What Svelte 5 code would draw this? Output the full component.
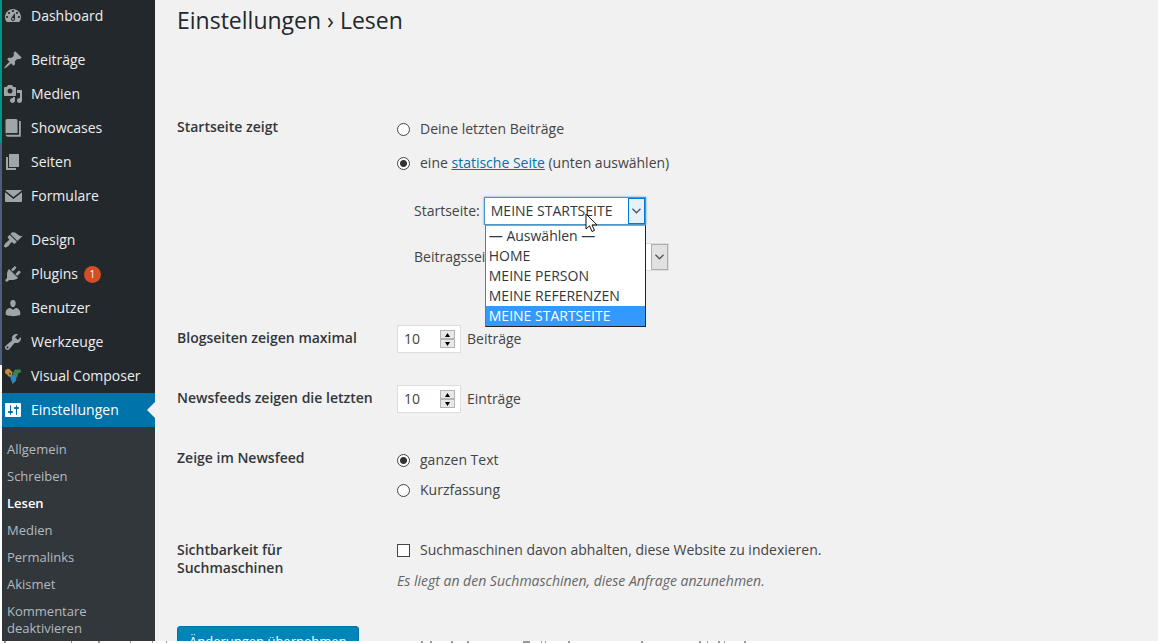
<script lang="ts">
  type MenuItem = { label: string; icon: string; count?: number; gap?: boolean; current?: boolean };

  const menu: MenuItem[] = [
    { label: 'Dashboard', icon: 'dashboard' },
    { label: 'Beiträge', icon: 'post', gap: true },
    { label: 'Medien', icon: 'media' },
    { label: 'Showcases', icon: 'showcases' },
    { label: 'Seiten', icon: 'page' },
    { label: 'Formulare', icon: 'mail' },
    { label: 'Design', icon: 'design', gap: true },
    { label: 'Plugins', icon: 'plugins', count: 1 },
    { label: 'Benutzer', icon: 'users' },
    { label: 'Werkzeuge', icon: 'tools' },
    { label: 'Visual Composer', icon: 'composer' },
    { label: 'Einstellungen', icon: 'settings', current: true },
  ];

  const submenu = ['Allgemein', 'Schreiben', 'Lesen', 'Medien', 'Permalinks', 'Akismet', 'Kommentare deaktivieren'];

  const icons: Record<string, string> = {
    dashboard: 'M3.76 16h12.48c1.11-1.32 1.77-3.03 1.77-4.88C18 6.65 14.42 3 10 3S2 6.65 2 11.12c0 1.85.65 3.56 1.76 4.88zM10 4c.55 0 1 .45 1 1s-.45 1-1 1-1-.45-1-1 .45-1 1-1zM6 6c.55 0 1 .45 1 1s-.45 1-1 1-1-.45-1-1 .45-1 1-1zm8 0c.55 0 1 .45 1 1s-.45 1-1 1-1-.45-1-1 .45-1 1-1zm-5.37 5.55L12 7v6c0 1.1-.9 2-2 2s-2-.9-2-2c0-.57.24-1.08.63-1.45zM4 10c.55 0 1 .45 1 1s-.45 1-1 1-1-.45-1-1 .45-1 1-1zm12 0c.55 0 1 .45 1 1s-.45 1-1 1-1-.45-1-1 .45-1 1-1zm-5 3c0-.55-.45-1-1-1s-1 .45-1 1 .45 1 1 1 1-.45 1-1z',
    post: 'M10.44 3.02l1.82-1.82 6.36 6.35-1.83 1.82c-1.05-.68-2.48-.57-3.41.36l-.75.75c-.92.93-1.04 2.35-.35 3.41l-1.83 1.82-2.41-2.41-2.8 2.79c-.42.42-3.38 2.71-3.8 2.29s1.86-3.39 2.28-3.81l2.79-2.79L4.1 9.36l1.83-1.82c1.05.69 2.48.57 3.4-.36l.75-.75c.93-.92 1.05-2.35.36-3.41z',
    media: 'M13 11V4c0-.55-.45-1-1-1h-1.67L9 1H5L3.67 3H2c-.55 0-1 .45-1 1v7c0 .55.45 1 1 1h10c.55 0 1-.45 1-1zM7 4.5c1.38 0 2.5 1.12 2.5 2.5S8.38 9.5 7 9.5 4.5 8.38 4.5 7 5.62 4.5 7 4.5zM14 6h5v10.5c0 1.38-1.12 2.5-2.5 2.5S14 17.88 14 16.5s1.12-2.5 2.5-2.5c.17 0 .34.02.5.05V9h-3V6zm-4 8.05V13h2v3.5c0 1.38-1.12 2.5-2.5 2.5S7 17.88 7 16.5 8.12 14 9.5 14c.17 0 .34.02.5.05z',
    showcases: 'M4 1h9a1.500 1.500 0 0 1 1.500 1.500V15H4a1.500 1.500 0 0 0-1.500.8V2.500A1.500 1.500 0 0 1 4 1zM16 3h1.800v15.800H5a2.500 2.500 0 0 1-2.500-2h13.500z',
    page: 'M6 15V2h10v13H6zm-1 1h8v2H3V5h2v11z',
    mail: 'M3 4h15a1 1 0 0 1 .8.4L10.500 11 2.200 4.400A1 1 0 0 1 3 4zM2 6.200l8.500 6.900L19 6.200V15a1 1 0 0 1-1 1H3a1 1 0 0 1-1-1z',
    design: 'M14.48 11.06L7.41 3.99l1.5-1.5c.5-.56 2.3-.47 3.51.32 1.21.8 1.43 1.28 2.91 2.1 1.18.64 2.45 1.26 4.45.85zm-.71.71L6.7 4.7 4.93 6.47c-.39.39-.39 1.02 0 1.41l1.06 1.06c.39.39.39 1.03 0 1.42-.6.6-1.43 1.11-2.21 1.69-.35.26-.7.53-1.01.84C1.43 14.23.4 16.08 1.4 17.07c.99 1 2.84-.03 4.18-1.36.31-.31.58-.66.85-1.02.57-.78 1.08-1.61 1.69-2.21.39-.39 1.02-.39 1.41 0l1.06 1.06c.39.39 1.02.39 1.41 0z',
    plugins: 'M13.11 4.36L9.87 7.6 8 5.73l3.24-3.24c.35-.34 1.05-.2 1.56.32.52.51.66 1.21.31 1.55zm-8 1.77l.91-1.12 9.01 9.01-1.19.84c-.71.71-2.63 1.16-3.82 1.16H6.14L4.9 17.26c-.59.59-1.54.59-2.12 0-.59-.58-.59-1.53 0-2.12l1.24-1.24v-3.88c0-1.13.4-3.19 1.09-3.89zm7.26 3.97l3.24-3.24c.34-.35 1.04-.21 1.55.31.52.51.66 1.21.31 1.55l-3.24 3.25z',
    users: 'M10 9.25c-2.27 0-2.73-3.44-2.73-3.44C7 4.02 7.82 2 9.97 2c2.16 0 2.98 2.02 2.71 3.81 0 0-.41 3.44-2.68 3.44zm0 2.57L12.72 10c2.39 0 4.52 2.33 4.52 4.53v2.49s-3.65 1.13-7.24 1.13c-3.65 0-7.24-1.13-7.24-1.13v-2.49c0-2.25 1.94-4.48 4.47-4.48z',
    tools: 'M16.68 9.77c-1.34 1.34-3.3 1.67-4.95.99l-5.41 6.52c-.99.99-2.59.99-3.58 0s-.99-2.59 0-3.57l6.52-5.42c-.68-1.65-.35-3.61.99-4.95 1.28-1.28 3.12-1.62 4.72-1.06l-2.89 2.89 2.82 2.82 2.86-2.87c.53 1.58.18 3.39-1.08 4.65zM3.81 16.21c.4.39 1.04.39 1.43 0 .4-.4.4-1.04 0-1.43-.39-.4-1.03-.4-1.43 0-.39.39-.39 1.03 0 1.43z',
    settings: 'M18 16V4c0-.55-.45-1-1-1H3c-.55 0-1 .45-1 1v12c0 .55.45 1 1 1h14c.55 0 1-.45 1-1zM8 11h1c.55 0 1 .45 1 1s-.45 1-1 1H8v1.5c0 .28-.22.5-.5.5s-.5-.22-.5-.5V13H6c-.55 0-1-.45-1-1s.45-1 1-1h1V5.5c0-.28.22-.5.5-.5s.5.22.5.5V11zm5-2h-1c-.55 0-1-.45-1-1s.45-1 1-1h1V5.5c0-.28.22-.5.5-.5s.5.22.5.5V7h1c.55 0 1 .45 1 1s-.45 1-1 1h-1v5.5c0 .28-.22.5-.5.5s-.5-.22-.5-.5V9z',
  };

  const pages = ['— Auswählen —', 'HOME', 'MEINE PERSON', 'MEINE REFERENZEN', 'MEINE STARTSEITE'];

  let frontType = $state('page');
  let frontPage = $state('MEINE STARTSEITE');
  let postsPage = $state('— Auswählen —');
  let open = $state(true);
  let postsPerPage = $state(10);
  let postsPerFeed = $state(10);
  let feedType = $state('full');
  let noIndex = $state(false);

  function pick(page: string) {
    frontPage = page;
    open = false;
  }
</script>

{#snippet chevron()}
  <svg width="9" height="6" viewBox="0 0 9 6" fill="none" stroke="#555" stroke-width="1.3"><path d="M.5.8l4 4 4-4" /></svg>
{/snippet}

{#snippet spinner(step: (by: number) => void)}
  <span class="spinner">
    <button type="button" tabindex="-1" aria-label="Mehr" onclick={() => step(1)}>
      <svg width="7" height="4" viewBox="0 0 7 4"><path d="M3.500 0L6 4H1z" /></svg>
    </button>
    <button type="button" tabindex="-1" aria-label="Weniger" onclick={() => step(-1)}>
      <svg width="7" height="4" viewBox="0 0 7 4"><path d="M3.500 4L6 0H1z" /></svg>
    </button>
  </span>
{/snippet}

<div class="screen">
  <div class="admin">
    <div class="edge"></div>

    <nav class="sidebar">
      <ul class="menu">
        {#each menu as item}
          <li class:gap={item.gap}>
            <a href="#{item.icon}" class:current={item.current}>
              <svg class="icon" width="20" height="20" viewBox="0 0 20 20" aria-hidden="true">
                {#if item.icon === 'composer'}
                  <path fill="#c98d35" d="M2 5.500a3 3 0 0 1 5-2l2.500 3-1 4.500-3-.5L4 8.500A3 3 0 0 1 2 5.500z" />
                  <path fill="#3c8552" d="M10 7l2-3.500h5.500L18 6l-3 1.500-.5 3.500-3.500 1.500z" />
                  <path fill="#2d8ab8" d="M7 10.500l3-2 3.500 3.500-1 3.500-3 2.500-1-3z" />
                  <path fill="#23282d" d="M6 6.500l2 1-1 2z" />
                {:else}
                  <path d={icons[item.icon]} />
                {/if}
              </svg>
              {item.label}
              {#if item.count}<span class="count">{item.count}</span>{/if}
            </a>
          </li>
        {/each}
      </ul>
      <ul class="submenu">
        {#each submenu as item}
          <li><a href="#sub" class:active={item === 'Lesen'}>{item}</a></li>
        {/each}
      </ul>
    </nav>

    <main>
      <h1>Einstellungen › Lesen</h1>

      <form onsubmit={(e) => e.preventDefault()}>
        <div class="row" role="group" aria-labelledby="front-title">
          <div class="title" id="front-title">Startseite zeigt</div>
          <div class="field">
            <div class="radios wide">
              <label><input type="radio" value="posts" bind:group={frontType} /> Deine letzten Beiträge</label>
              <label>
                <input type="radio" value="page" bind:group={frontType} />
                <span>eine <a href="#pages">statische Seite</a> (unten auswählen)</span>
              </label>
            </div>
            <ul class="selects">
              <li>
                <label for="front-page">Startseite:</label>
                <span class="select focus">
                  <select id="front-page" bind:value={frontPage} onmousedown={(e) => { e.preventDefault(); open = !open; }}>
                    {#each pages as page}<option>{page}</option>{/each}
                  </select>
                  <span class="arrow">{@render chevron()}</span>
                  {#if open}
                    <span class="list" role="listbox" aria-label="Startseite">
                      {#each pages as page}
                        <button type="button" role="option" aria-selected={page === frontPage} onclick={() => pick(page)}>{page}</button>
                      {/each}
                    </span>
                  {/if}
                  <svg class="cursor" width="13" height="20" viewBox="0 0 13 20" aria-hidden="true">
                    <path d="M1 1v15l3.500-3.200 2.500 5.700 2.500-1.100L7 11.900h5z" fill="#fff" stroke="#111" />
                  </svg>
                </span>
              </li>
              <li>
                <label for="posts-page">Beitragsseite:</label>
                <span class="select">
                  <select id="posts-page" bind:value={postsPage}>
                    {#each pages as page}<option>{page}</option>{/each}
                  </select>
                  <span class="arrow">{@render chevron()}</span>
                </span>
              </li>
            </ul>
          </div>
        </div>

        <div class="row">
          <label class="title" for="per-page">Blogseiten zeigen maximal</label>
          <div class="field amount">
            <span class="number">
              <input id="per-page" type="number" bind:value={postsPerPage} />
              {@render spinner((by) => (postsPerPage += by))}
            </span>
            Beiträge
          </div>
        </div>

        <div class="row">
          <label class="title" for="per-feed">Newsfeeds zeigen die letzten</label>
          <div class="field amount">
            <span class="number">
              <input id="per-feed" type="number" bind:value={postsPerFeed} />
              {@render spinner((by) => (postsPerFeed += by))}
            </span>
            Einträge
          </div>
        </div>

        <div class="row" role="group" aria-labelledby="feed-title">
          <div class="title" id="feed-title">Zeige im Newsfeed</div>
          <div class="field radios">
            <label><input type="radio" value="full" bind:group={feedType} /> ganzen Text</label>
            <label><input type="radio" value="short" bind:group={feedType} /> Kurzfassung</label>
          </div>
        </div>

        <div class="row" role="group" aria-labelledby="index-title">
          <div class="title narrow" id="index-title">Sichtbarkeit für Suchmaschinen</div>
          <div class="field">
            <label class="check">
              <input type="checkbox" bind:checked={noIndex} />
              Suchmaschinen davon abhalten, diese Website zu indexieren.
            </label>
            <p class="hint">Es liegt an den Suchmaschinen, diese Anfrage anzunehmen.</p>
          </div>
        </div>

        <button class="submit" type="submit">Änderungen übernehmen</button>
      </form>
    </main>
  </div>

  <!-- upper edge of the window lying underneath -->
  <svg class="below" height="2" aria-hidden="true">
    <path
      d="M4 1h2M71 1h1M98 1h2M130 1h1M152 1h1M166 1h1M421 1h2M430 1h2M451 1h2M467 1h2M523 1h7M541 1h1M545 1h1M568 1h2M641 1h2M699 1h2M707 1h1M718 1h2M724 1h1M744 1h2"
      stroke="#999"
      stroke-width="2"
    />
  </svg>
</div>

<style>
  :global(body) {
    margin: 0;
    background: #fff;
  }

  .screen {
    display: flex;
    flex-direction: column;
    height: 100vh;
    overflow: hidden;
    font-family: 'Open Sans', 'Noto Sans', sans-serif;
    font-size: 14px;
    line-height: 18px;
    color: #444;
  }

  .admin {
    flex: 1;
    min-height: 0;
    display: grid;
    grid-template-columns: 2px 153px 1fr;
    overflow: hidden;
    background: #f1f1f1;
  }

  .below {
    flex: none;
    width: 100%;
    background: #fff;
  }

  .edge {
    background: linear-gradient(#009688 0 143px, #4b5f7a 143px 365px, #fff 365px);
  }

  ul {
    list-style: none;
    margin: 0;
    padding: 0;
  }

  .sidebar {
    background: #23282d;
    display: flex;
    flex-direction: column;
  }

  /* the page is scrolled a little past the first entry */
  .menu {
    margin-top: -1px;
  }

  .menu .gap {
    margin-top: 10px;
  }

  .menu a {
    position: relative;
    display: flex;
    align-items: center;
    gap: 6px;
    height: 34px;
    padding-left: 1px;
    color: #eee;
    font-size: 14px;
    text-decoration: none;
    white-space: nowrap;
  }

  .icon {
    flex: none;
    margin-right: 2px;
    fill: #a0a5aa;
  }

  .menu .current {
    background: #0073aa;
    color: #fff;
  }

  .current .icon {
    fill: #fff;
  }

  .menu .current::after {
    content: '';
    position: absolute;
    right: 0;
    top: 9px;
    border: 8px solid transparent;
    border-left: 0;
    border-right-color: #f1f1f1;
  }

  .count {
    width: 17px;
    border-radius: 9px;
    background: #d54e21;
    color: #fff;
    font-size: 10px;
    line-height: 17px;
    text-align: center;
  }

  .submenu {
    flex: 1;
    padding-top: 9px;
    background: #32373c;
  }

  .submenu a {
    display: block;
    padding: 5px 40px 5px 5px;
    color: #b4b9be;
    font-size: 13px;
    line-height: 17px;
    text-decoration: none;
  }

  .submenu .active {
    color: #fff;
    font-weight: 600;
  }

  main {
    padding: 0 22px;
  }

  h1 {
    margin: 0 0 58px;
    padding-top: 4px;
    font-size: 23px;
    font-weight: 400;
    line-height: 32px;
    color: #23282d;
  }

  form {
    padding-top: 4px;
  }

  .row {
    display: grid;
    grid-template-columns: 200px 1fr;
    column-gap: 20px;
  }

  .title {
    padding-top: 20px;
    font-weight: 600;
    color: #32373c;
  }

  .narrow {
    padding-right: 60px;
  }

  .field {
    padding: 16px 0;
  }

  .radios {
    display: flex;
    flex-direction: column;
  }

  .wide {
    gap: 4px;
  }

  .radios label,
  .check {
    display: flex;
    align-items: center;
    gap: 10px;
    height: 30px;
  }

  .check {
    height: 26px;
  }

  .field a {
    color: #0073aa;
  }

  input[type='radio'],
  input[type='checkbox'] {
    appearance: none;
    flex: none;
    width: 13px;
    height: 13px;
    margin: 0;
    border: 1px solid #444;
    background: #fff;
  }

  input[type='radio'] {
    border-radius: 50%;
  }

  input:checked {
    background: radial-gradient(circle, #333 0 3px, #fff 4px);
  }

  .selects {
    margin: 19px 0 22px;
    padding-left: 17px;
    display: flex;
    flex-direction: column;
    gap: 18px;
  }

  .selects li {
    display: flex;
    align-items: center;
    gap: 4px;
  }

  .select {
    position: relative;
    display: flex;
    width: 163px;
    height: 28px;
    box-sizing: border-box;
    border: 1px solid #ddd;
    background: #fff;
  }

  .select.focus {
    width: 162px;
    border: 1px solid #4a96cf;
    box-shadow: 0 0 2px #5b9dd9;
  }

  select {
    appearance: none;
    flex: 1;
    min-width: 0;
    padding: 0 0 0 6px;
    border: 0;
    outline: 0;
    background: none;
    font: inherit;
    color: #32373c;
  }

  .arrow {
    display: flex;
    align-items: center;
    justify-content: center;
    width: 17px;
    box-sizing: border-box;
    border: 1px solid #adadad;
    background: #e1e1e1;
    pointer-events: none;
  }

  .focus .arrow {
    border-color: #0078d7;
    background: #e5f1fb;
  }

  .list {
    position: absolute;
    z-index: 1;
    top: 27px;
    left: 0;
    right: -1px;
    border: 1px solid #222;
    border-left-color: #777;
    border-top-color: #7ab;
    background: #fff;
  }

  .list button {
    display: block;
    width: 100%;
    padding: 0 0 0 3px;
    border: 0;
    background: none;
    color: #32373c;
    font: inherit;
    line-height: 20px;
    text-align: left;
  }

  .list [aria-selected='true'] {
    background: #3399ff;
    color: #fff;
  }

  .cursor {
    position: absolute;
    z-index: 2;
    left: 100px;
    top: 15px;
    pointer-events: none;
  }

  .amount {
    display: flex;
    align-items: center;
    gap: 6px;
  }

  .number {
    display: flex;
    align-items: center;
    width: 64px;
    height: 28px;
    box-sizing: border-box;
    padding-right: 5px;
    border: 1px solid #ddd;
    background: #fff;
  }

  .number input {
    appearance: textfield;
    flex: 1;
    min-width: 0;
    padding: 0 0 0 6px;
    border: 0;
    outline: 0;
    background: none;
    font: inherit;
    color: #444;
  }

  .spinner {
    display: flex;
    flex-direction: column;
    width: 15px;
  }

  .spinner button {
    display: flex;
    align-items: center;
    justify-content: center;
    height: 9px;
    padding: 0;
    border: 1px solid #b4b4b4;
    background: #e8e8e8;
  }

  .hint {
    margin: 9px 0 0;
    font-style: italic;
    color: #666;
  }

  .submit {
    height: 30px;
    margin-top: 20px;
    padding: 0 11px;
    border: 1px solid #0073aa;
    border-radius: 3px;
    background: #0085ba;
    color: #fff;
    font: inherit;
    font-size: 13px;
  }
</style>
